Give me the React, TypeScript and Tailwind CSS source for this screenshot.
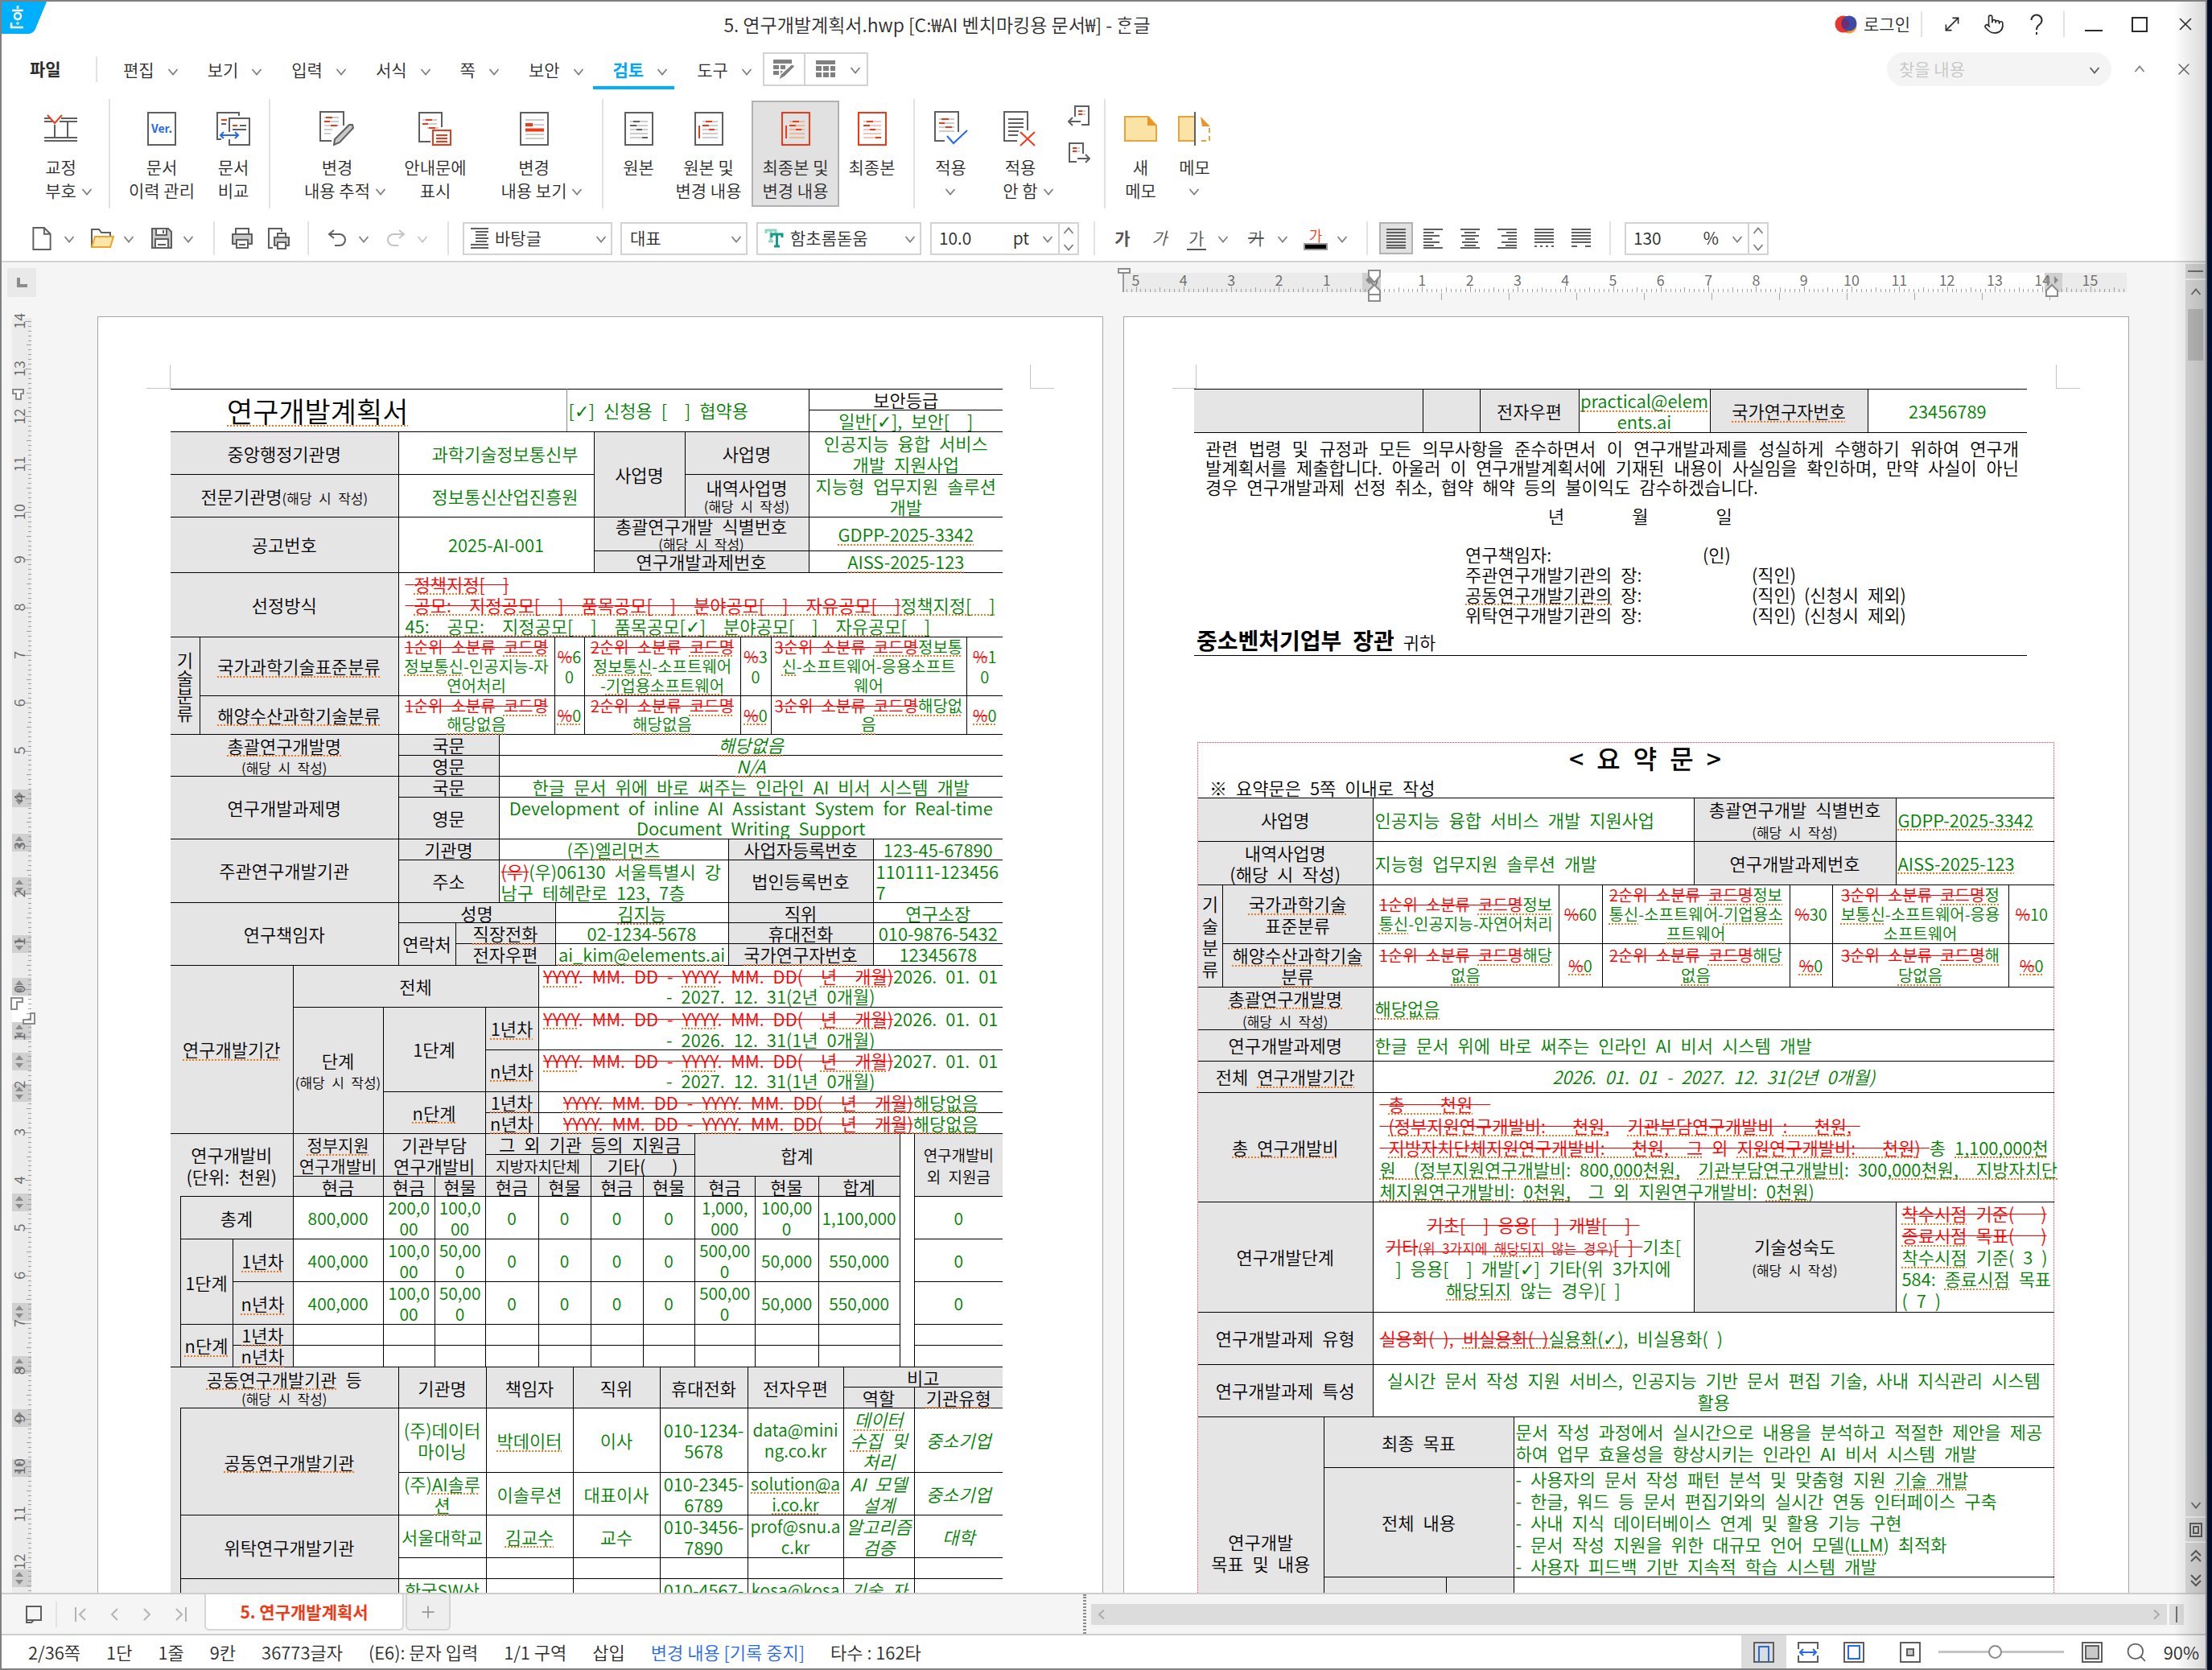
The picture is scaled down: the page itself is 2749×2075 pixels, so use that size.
import React from "react";
import clsx from "clsx";
import { MoveDiagonal, Pointer, Search, X, Plus } from "lucide-react";

/* ---------- rich text ---------- */

function withChecks(text: string): React.ReactNode {
  const parts = text.replace(/ /g, "\u2002").split("✓");
  return parts.map((p, i) => (
    <React.Fragment key={i}>
      {i > 0 && <span className="font-['DejaVu_Sans',sans-serif] leading-none">✓</span>}
      {p}
    </React.Fragment>
  ));
}

/* Inline marks: {..} spell-check underline, ^..^ deleted text, |..| small print. */
function Rich({ t }: { t: string }) {
  const out: React.ReactNode[] = [];
  let squiggle = false;
  let deleted = false;
  let small = false;
  let buf = "";
  const flush = () => {
    if (!buf) return;
    let node: React.ReactNode = withChecks(buf);
    buf = "";
    if (squiggle)
      node = (
        <span className="underline decoration-[#f07820] decoration-dotted decoration-2 underline-offset-[3px] [text-decoration-skip-ink:none]">
          {node}
        </span>
      );
    if (small) node = <small className="text-[17px] leading-none">{node}</small>;
    if (deleted) node = <del className="text-[#ff0000] line-through decoration-1">{node}</del>;
    out.push(<React.Fragment key={out.length}>{node}</React.Fragment>);
  };
  for (const ch of t) {
    if (ch === "{" || ch === "}") {
      flush();
      squiggle = ch === "{";
    } else if (ch === "^") {
      flush();
      deleted = !deleted;
    } else if (ch === "|") {
      flush();
      small = !small;
    } else buf += ch;
  }
  flush();
  return <>{out}</>;
}

type CellProps = { t?: string; c?: number; r?: number; className?: string };

function H({ t, c, r, className }: CellProps) {
  return (
    <th
      colSpan={c}
      rowSpan={r}
      className={clsx("border border-black bg-[#e5e5e5] p-0 text-center font-[350] whitespace-pre text-black", className)}
    >
      {t && <Rich t={t} />}
    </th>
  );
}

function D({ t, c, r, className }: CellProps) {
  return (
    <td
      colSpan={c}
      rowSpan={r}
      className={clsx("border border-black p-0 font-[350] whitespace-pre text-[#008000]", className ?? "text-center")}
    >
      {t && <Rich t={t} />}
    </td>
  );
}

function Sheet({ cols, children }: { cols: number[]; children: React.ReactNode }) {
  return (
    <table className="w-full table-fixed border-collapse border border-black text-[22px] leading-[25px] [border-style:solid_hidden_hidden_hidden]">
      <colgroup>
        {cols.map((w, i) => (
          <col key={i} style={{ width: w }} />
        ))}
      </colgroup>
      <tbody>{children}</tbody>
    </table>
  );
}

const NOTE = "|(해당 시 작성)|";
const PERIOD = "^{YYYY}. MM. DD - {YYYY}. MM. DD(  {년  개월})^";
const PERIOD_NONE = "^{YYYY}. MM. DD - {YYYY}. MM. {DD(  년  개월)}^{해당없음}";

/* ---------- pages ---------- */

function CropMarks() {
  return (
    <div className="mx-[60px] mt-[59px] flex justify-between">
      <div className="h-[30px] w-[30px] border-r border-b border-[#c4c4c4]" />
      <div className="h-[30px] w-[30px] border-b border-l border-[#c4c4c4]" />
    </div>
  );
}

function Page({ children }: { children: React.ReactNode }) {
  return (
    <article className="w-[1250px] shrink-0 border border-b-0 border-[#a6a6a6] bg-white">
      <CropMarks />
      {children}
    </article>
  );
}

function PlanPage() {
  return (
    <Page>
      <div className="ml-[90px] w-[1034px]">
        <Sheet cols={[492, 301, 241]}>
          <tr className="h-[26px]">
            <td rowSpan={2} className="border border-black border-r-[#8c8c8c] p-0 pl-[70px] text-left text-[35px] leading-[44px] font-[350] text-black">
              <Rich t="{연구개발계획서}" />
            </td>
            <D r={2} t="[✓] 신청용 [  ] 협약용" className="pl-[2px] text-left" />
            <D t="보안등급" className="text-center !text-black" />
          </tr>
          <tr className="h-[26px]">
            <D t="일반[✓], 보안[  ]" />
          </tr>
        </Sheet>
        <Sheet cols={[283, 243, 113, 154, 241]}>
          <tr className="h-[53px]">
            <H t="중앙행정기관명" />
            <D t="  과학기술정보통신부" />
            <H r={2} t="사업명" />
            <H t="사업명" />
            <D t={"인공지능 융합 서비스\n개발 지원사업"} className="text-center leading-[26px]" />
          </tr>
          <tr className="h-[53px]">
            <H t={"전문기관명" + NOTE} />
            <D t="  정보통신산업진흥원" />
            <H t={"내역사업명\n" + NOTE} className="leading-[21px]" />
            <D t={"지능형 업무지원 솔루션\n개발"} className="text-center leading-[26px]" />
          </tr>
          <tr className="h-[42px]">
            <H r={2} t="공고번호" />
            <D r={2} t="2025-AI-001" />
            <H c={2} t={"총괄연구개발 식별번호\n" + NOTE} className="leading-[20px]" />
            <D t="{GDPP-2025-3342}" />
          </tr>
          <tr className="h-[26px]">
            <H c={2} t="연구개발과제번호" />
            <D t="{AISS-2025-123}" />
          </tr>
        </Sheet>
        <Sheet cols={[283, 751]}>
          <tr className="h-[79px]">
            <H t="선정방식" />
            <D
              className="pl-[8px] text-left leading-[26px]"
              t={
                "^ {정책지정}[  ]^\n^ {공모:  지정공모[  ]  품목공모[  ]  분야공모[  ]  자유공모[  ]}^{정책지정[  ]}\n{45:  공모:  지정공모[  ]  품목공모[✓]  분야공모[  ]  자유공모[  ]}"
              }
            />
          </tr>
        </Sheet>
        <Sheet cols={[36, 247, 194, 37, 194, 38, 243, 45]}>
          <tr className="h-[73px]">
            <H r={2} t={"기\n술\n분\n류"} className="leading-[22px]" />
            <H t="{국가과학기술표준분류}" />
            <D t={"^1순위 소분류 {코드명}^\n{정보통신}-인공지능-자\n연어처리"} className="text-center text-[20px] leading-[24px]" />
            <D t={"^%^6\n0"} className="text-center text-[20px]" />
            <D t={"^2순위 소분류 {코드명}^\n{정보통신}-소프트웨어\n-{기업용소프트웨어}"} className="text-center text-[20px] leading-[24px]" />
            <D t={"^%^3\n0"} className="text-center text-[20px]" />
            <D t={"^3순위 소분류 {코드명}^{정보통}\n{신}-소프트웨어-응용소프트\n웨어"} className="text-center text-[20px] leading-[24px]" />
            <D t={"^%^1\n0"} className="text-center text-[20px]" />
          </tr>
          <tr className="h-[48px]">
            <H t="{해양수산과학기술분류}" />
            <D t={"^1순위 소분류 {코드명}^\n{해당없음}"} className="text-center text-[20px] leading-[23px]" />
            <D t="^{%}^{0}" className="text-center text-[20px]" />
            <D t={"^2순위 소분류 {코드명}^\n{해당없음}"} className="text-center text-[20px] leading-[23px]" />
            <D t="^{%}^{0}" className="text-center text-[20px]" />
            <D t={"^3순위 소분류 {코드명}^{해당없}\n{음}"} className="text-center text-[20px] leading-[23px]" />
            <D t="^{%}^{0}" className="text-center text-[20px]" />
          </tr>
        </Sheet>
        <Sheet cols={[283, 125, 626]}>
          <tr className="h-[26px]">
            <H r={2} t={"{총괄연구개발명}\n" + NOTE} />
            <H t="국문" />
            <D t="{해당없음}" className="text-center italic" />
          </tr>
          <tr className="h-[26px]">
            <H t="영문" />
            <D t="{N/A}" className="text-center italic" />
          </tr>
          <tr className="h-[26px]">
            <H r={2} t="연구개발과제명" />
            <H t="국문" />
            <D t="한글 문서 위에 바로 써주는 인라인 AI 비서 시스템 개발" />
          </tr>
          <tr className="h-[51px]">
            <H t="영문" />
            <D t={"Development of inline AI Assistant System for Real-time\nDocument Writing Support"} />
          </tr>
        </Sheet>
        <Sheet cols={[283, 125, 285, 180, 161]}>
          <tr className="h-[26px]">
            <H r={2} t="주관연구개발기관" />
            <H t="기관명" />
            <D t="(주){엘리먼츠}" />
            <H t="사업자등록번호" />
            <D t="123-45-67890" />
          </tr>
          <tr className="h-[53px]">
            <H t="주소" />
            <D t={"^(우)^(우)06130 서울특별시 강\n남구 테헤란로 123, 7층"} className="pl-[2px] text-left leading-[26px]" />
            <H t="법인등록번호" />
            <D t={"110111-123456\n7"} className="pl-[3px] text-left leading-[26px]" />
          </tr>
        </Sheet>
        <Sheet cols={[283, 71, 124, 215, 180, 161]}>
          <tr className="h-[25px] leading-[24px]">
            <H r={3} t="연구책임자" />
            <H c={2} t="성명" />
            <D t="{김지능}" />
            <H t="직위" />
            <D t="연구소장" />
          </tr>
          <tr className="h-[26px]">
            <H r={2} t="연락처" />
            <H t="{직장전화}" />
            <D t="02-1234-5678" />
            <H t="휴대전화" />
            <D t="010-9876-5432" />
          </tr>
          <tr className="h-[26px]">
            <H t="전자우편" />
            <D t="{ai_kim@elements.ai}" />
            <H t="{국가연구자번호}" />
            <D t="12345678" />
          </tr>
        </Sheet>
        <Sheet cols={[152, 112, 127, 66, 577]}>
          <tr className="h-[52px]">
            <H r={5} t="{연구개발기간}" />
            <H c={3} t="전체" />
            <D t={PERIOD + "2026. 01. 01\n- 2027. 12. 31(2년 0개월)"} />
          </tr>
          <tr className="h-[53px]">
            <H r={4} t={"단계\n" + NOTE} />
            <H r={2} t="1단계" />
            <H t="{1년차}" />
            <D t={PERIOD + "2026. 01. 01\n- 2026. 12. 31(1년 0개월)"} className="text-center leading-[26px]" />
          </tr>
          <tr className="h-[52px]">
            <H t="{n년차}" />
            <D t={PERIOD + "2027. 01. 01\n- 2027. 12. 31(1년 0개월)"} />
          </tr>
          <tr className="h-[26px]">
            <H r={2} t="{n단계}" />
            <H t="{1년차}" />
            <D t={PERIOD_NONE} />
          </tr>
          <tr className="h-[26px]">
            <H t="{n년차}" />
            <D t={PERIOD_NONE} />
          </tr>
        </Sheet>
        <Sheet cols={[12, 65, 75, 112, 64, 63, 66, 65, 65, 64, 75, 79, 101, 18, 110]}>
          <tr className="h-[26px]">
            <H r={3} c={3} t={"연구개발비\n(단위: 천원)"} className="border-b-0 leading-[27px]" />
            <H r={2} t={"{정부지원}\n연구개발비"} className="text-[21px] leading-[26px]" />
            <H r={2} c={2} t={"기관부담\n연구개발비"} className="leading-[26px]" />
            <H c={4} t="그 외 기관 등의 지원금" />
            <H r={2} c={3} t="합계" />
            <D r={8} className="border-b-0" />
            <H r={3} t={"연구개발비\n외 지원금"} className="text-[19px] leading-[27px]" />
          </tr>
          <tr className="h-[27px]">
            <H c={2} t="지방자치단체" className="text-[19px]" />
            <H c={2} t="기타(   )" />
          </tr>
          <tr className="h-[25px] leading-[24px]">
            {["현금", "현금", "현물", "현금", "현물", "현금", "현물", "현금", "현물", "합계"].map((s, i) => (
              <H key={i} t={s} />
            ))}
          </tr>
          <tr className="h-[53px] leading-[26px]">
            <H r={5} className="border-t-0" />
            <H c={2} t="총계" />
            {["800,000", "200,0\n00", "100,0\n00", "0", "0", "0", "0", "1,000,\n000", "100,00\n0", "1,100,000", "0"].map((s, i) => (
              <D key={i} t={s} className="text-center text-[21px]" />
            ))}
          </tr>
          <tr className="h-[53px] leading-[26px]">
            <H r={2} t="1단계" />
            <H t="{1년차}" />
            {["400,000", "100,0\n00", "50,00\n0", "0", "0", "0", "0", "500,00\n0", "50,000", "550,000", "0"].map((s, i) => (
              <D key={i} t={s} className="text-center text-[21px]" />
            ))}
          </tr>
          <tr className="h-[53px] leading-[26px]">
            <H t="{n년차}" />
            {["400,000", "100,0\n00", "50,00\n0", "0", "0", "0", "0", "500,00\n0", "50,000", "550,000", "0"].map((s, i) => (
              <D key={i} t={s} className="text-center text-[21px]" />
            ))}
          </tr>
          <tr className="h-[26px]">
            <H r={2} t="{n단계}" />
            <H t="{1년차}" />
            {Array.from({ length: 11 }, (_, i) => (
              <D key={i} />
            ))}
          </tr>
          <tr className="h-[26px]">
            <H t="{n년차}" />
            {Array.from({ length: 11 }, (_, i) => (
              <D key={i} />
            ))}
          </tr>
        </Sheet>
        <Sheet cols={[12, 271, 109, 108, 108, 109, 119, 88, 110]}>
          <tr className="h-[25px] leading-[24px]">
            <H r={2} c={2} t={"{공동연구개발기관} 등\n" + NOTE} className="border-b-0 leading-[22px]" />
            <H r={2} t="기관명" />
            <H r={2} t="책임자" />
            <H r={2} t="직위" />
            <H r={2} t="휴대전화" />
            <H r={2} t="전자우편" />
            <H c={2} t="비고" />
          </tr>
          <tr className="h-[26px]">
            <H t="역할" />
            <H t="{기관유형}" />
          </tr>
          <tr className="h-[80px] leading-[26px]">
            <H r={5} className="border-t-0" />
            <H r={2} t="{공동연구개발기관}" />
            <D t={"(주)데이터\n마이닝"} />
            <D t="{박데이터}" />
            <D t="이사" />
            <D t={"010-1234-\n5678"} />
            <D t={"data@mini\nng.co.kr"} className="text-center text-[21px]" />
            <D t={"{데이터}\n{수집} 및\n처리"} className="text-center italic" />
            <D t="중소기업" className="text-center italic" />
          </tr>
          <tr className="h-[53px] leading-[26px]">
            <D t={"(주){AI솔루\n션}"} />
            <D t="이솔루션" />
            <D t="대표이사" />
            <D t={"010-2345-\n6789"} />
            <D t={"{solution@a\ni.co.kr}"} className="text-center text-[21px]" />
            <D t={"AI 모델\n설계"} className="text-center italic" />
            <D t="중소기업" className="text-center italic" />
          </tr>
          <tr className="h-[53px] leading-[26px]">
            <H r={2} t="위탁연구개발기관" />
            <D t="서울대학교" />
            <D t="{김교수}" />
            <D t="교수" />
            <D t={"010-3456-\n7890"} />
            <D t={"prof@snu.a\nc.kr"} className="text-center text-[21px]" />
            <D t={"알고리즘\n검증"} className="text-center italic" />
            <D t="대학" className="text-center italic" />
          </tr>
          <tr className="h-[26px]">
            {Array.from({ length: 7 }, (_, i) => (
              <D key={i} />
            ))}
          </tr>
          <tr className="h-[53px] leading-[26px]">
            <H />
            <D t={"한국SW산\n업협회"} />
            <D t="최협회" />
            <D t="팀장" />
            <D t={"010-4567-\n8901"} />
            <D t={"kosa@kosa\n.or.kr"} className="text-center text-[21px]" />
            <D t={"기술 자\n문"} className="text-center italic" />
            <D t="협회" className="text-center italic" />
          </tr>
        </Sheet>
      </div>
    </Page>
  );
}

const SIGNERS: [string, string, string][] = [
  ["주관연구개발기관의 장:", "(직인)", ""],
  ["{공동연구개발기관의} 장:", "(직인)", "(신청시 제외)"],
  ["위탁연구개발기관의 장:", "(직인)", "(신청시 제외)"],
];

function SummaryPage() {
  return (
    <Page>
      <div className="ml-[87px] w-[1035px]">
        <Sheet cols={[284, 71, 123, 163, 196, 198]}>
          <tr className="h-[53px] leading-[26px]">
            <H />
            <H />
            <H t="전자우편" />
            <D t={"{practical@elem\nents.ai}"} className="text-center" />
            <H t="{국가연구자번호}" />
            <D t="23456789" />
          </tr>
        </Sheet>
        <section className="border-y border-black pt-[6px] text-[22px] leading-[24px] whitespace-pre-wrap text-black">
          <div className="mx-[14px] mr-[10px]">
            <p className="[text-align-last:justify]">관련  법령  및  규정과  모든  의무사항을  준수하면서  이  연구개발과제를  성실하게  수행하기  위하여  연구개</p>
            <p className="[text-align-last:justify]">발계획서를  제출합니다.  아울러  이  연구개발계획서에  기재된  내용이  사실임을  확인하며,  만약  사실이  아닌</p>
            <p>
              <Rich t="경우 연구개발과제 선정 취소, 협약 해약 등의 불이익도 감수하겠습니다." />
            </p>
          </div>
          <div className="mt-[12px] flex gap-[84px] pl-[440px]">
            <span>년</span>
            <span>월</span>
            <span>일</span>
          </div>
          <div className="mt-[24px] pl-[337px] leading-[25px]">
            <div className="flex">
              <span className="w-[295px]">연구책임자:</span>
              <span>(인)</span>
            </div>
            {SIGNERS.map(([name, seal, extra]) => (
              <div key={name} className="flex">
                <span className="w-[356px]">
                  <Rich t={name} />
                </span>
                <span className="w-[65px]">{seal}</span>
                <span>
                  <Rich t={extra} />
                </span>
              </div>
            ))}
          </div>
          <p className="mt-[2px] pl-[3px] leading-[34px]">
            <strong className="text-[28px] font-bold">
              <Rich t="중소벤처기업부 장관" />
            </strong>
            <Rich t=" 귀하" />
          </p>
        </section>
      </div>
      <section className="mt-[107px] ml-[91px] w-[1065px] border border-dotted border-[#e8375a] text-black">
        <h2 className="pl-[48px] text-center text-[32px] leading-[36px] font-medium">
          <Rich t="< 요 약 문 >" />
        </h2>
        <p className="mt-[6px] pl-[14px] text-[22px] leading-[26px]">
          <Rich t="※ 요약문은 5쪽 이내로 작성" />
        </p>
        <Sheet cols={[217, 399, 251, 197]}>
          <tr className="h-[54px]">
            <H t="사업명" />
            <D t="인공지능 융합 서비스 개발 지원사업" className="pl-[2px] text-left" />
            <H t={"총괄연구개발 식별번호\n" + NOTE} className="leading-[26px]" />
            <D t="{GDPP-2025-3342}" className="pl-[2px] text-left" />
          </tr>
          <tr className="h-[54px]">
            <H t={"내역사업명\n(해당 시 작성)"} className="leading-[26px]" />
            <D t="지능형 업무지원 솔루션 개발" className="pl-[2px] text-left" />
            <H t="연구개발과제번호" />
            <D t="{AISS-2025-123}" className="pl-[2px] text-left" />
          </tr>
        </Sheet>
        <Sheet cols={[30, 187, 231, 54, 233, 53, 219, 57]}>
          <tr className="h-[73px] text-[20px] leading-[24px]">
            <H r={2} t={"기\n술\n분\n류"} className="text-[22px] leading-[27px]" />
            <H t={"{국가과학기술}\n표준분류"} className="text-[22px] leading-[27px]" />
            <D t={"^1순위 소분류 {코드명}^{정보}\n{통신}-인공지능-자연어처리"} />
            <D t="^%^60" />
            <D t={"^2순위 소분류 {코드명}^{정보}\n{통신}-소프트웨어-{기업용소\n프트웨어}"} />
            <D t="^%^30" />
            <D t={"^3순위 소분류 {코드명}^{정}\n{보통신}-소프트웨어-응용\n소프트웨어"} />
            <D t="^%^10" />
          </tr>
          <tr className="h-[53px] text-[20px] leading-[25px]">
            <H t={"{해양수산과학기술\n분류}"} className="text-[22px] leading-[26px]" />
            <D t={"^1순위 소분류 {코드명}^{해당\n없음}"} />
            <D t="^{%}^{0}" />
            <D t={"^2순위 소분류 {코드명}^{해당\n없음}"} />
            <D t="^{%}^{0}" />
            <D t={"^3순위 소분류 {코드명}^{해\n당없음}"} />
            <D t="^{%}^{0}" />
          </tr>
        </Sheet>
        <Sheet cols={[217, 847]}>
          <tr className="h-[53px]">
            <H t={"{총괄연구개발명}\n" + NOTE} className="leading-[26px]" />
            <D t="{해당없음}" className="pl-[2px] text-left" />
          </tr>
          <tr className="h-[39px]">
            <H t="연구개발과제명" />
            <D t="한글 문서 위에 바로 써주는 인라인 AI 비서 시스템 개발" className="pl-[2px] text-left" />
          </tr>
          <tr className="h-[39px]">
            <H t="전체 {연구개발기간}" />
            <D t="2026. 01. 01 - 2027. 12. 31(2년 0개월)" className="text-center italic" />
          </tr>
          <tr className="h-[136px]">
            <H t="{총 연구개발비}" />
            <D
              className="pl-[8px] text-left leading-[27px]"
              t={
                "^ {총    천원}  ^\n^ {(정부지원연구개발비:   천원,}  {기관부담연구개발비} {:   천원,} ^\n^ {지방자치단체지원연구개발비:   천원,  그} 외 {지원연구개발비:   천원)} ^총 {1,100,000천}\n{원  (정부지원연구개발비}: 800,{000천원,}  {기관부담연구개발비}: 300,{000천원,  지방자치단}\n{체지원연구개발비}: {0천원,}  그 외 지원연구개발비: {0천원})"
              }
            />
          </tr>
        </Sheet>
        <Sheet cols={[217, 399, 251, 197]}>
          <tr className="h-[136px] leading-[27px]">
            <H t="연구개발단계" />
            <D
              t={
                "^기초[  ] 응용[  ] 개발[  ] ^\n^기타|(위 3가지에 {해당되지} 않는 경우)|[ ] ^기초[\n] 응용[  ] 개발[✓] 기타(위 3가지에\n{해당되지} 않는 경우)[ ]"
              }
            />
            <H t={"기술성숙도\n" + NOTE} />
            <D
              className="pl-[7px] text-left"
              t={"^{착수시점} 기준(   )^\n^{종료시점} 목표(   )^\n{착수시점} 기준( 3 )\n584: {종료시점} 목표\n( 7 )"}
            />
          </tr>
        </Sheet>
        <Sheet cols={[217, 847]}>
          <tr className="h-[65px]">
            <H t="연구개발과제 유형" />
            <D t="^실용화( ), {비실용화( )}^{실용화(✓)}, 비실용화( )" className="pl-[8px] text-left" />
          </tr>
          <tr className="h-[65px]">
            <H t="연구개발과제 특성" />
            <D
              t={"실시간 문서 작성 지원 서비스, 인공지능 기반 문서 편집 기술, 사내 지식관리 시스템\n활용"}
              className="text-center leading-[27px]"
            />
          </tr>
        </Sheet>
        <Sheet cols={[156, 152, 84, 672]}>
          <tr className="h-[63px] leading-[27px]">
            <H r={3} t={"연구개발\n목표 및 내용"} />
            <H c={2} t="최종 목표" />
            <D
              t={"문서 작성 과정에서 실시간으로 내용을 분석하고 적절한 제안을 제공\n하여 업무 효율성을 향상시키는 인라인 AI 비서 시스템 개발"}
              className="pl-[2px] text-left"
            />
          </tr>
          <tr className="h-[136px] leading-[27px]">
            <H c={2} t="전체 내용" />
            <D
              className="pl-[2px] text-left"
              t={
                "- 사용자의 문서 작성 패턴 분석 및 맞춤형 지원 {기술 개발}\n- 한글, 워드 등 문서 편집기와의 실시간 연동 인터페이스 구축\n- 사내 지식 데이터베이스 연계 및 활용 기능 구현\n- 문서 작성 지원을 위한 대규모 언어 모델({LLM}) 최적화\n- 사용자 피드백 기반 지속적 학습 시스템 개발"
              }
            />
          </tr>
          <tr className="h-[138px]">
            <H />
            <H />
            <D />
          </tr>
        </Sheet>
      </section>
    </Page>
  );
}

/* ---------- rulers ---------- */

const CM = 59.3;

function HorizontalRuler() {
  const zero = 1708;
  const ticks = Array.from({ length: 211 }, (_, i) => i - 52).filter((i) => i <= 157);
  return (
    <svg viewBox="121 326 2595 67" className="h-[67px] w-[2595px] shrink-0" fill="none">
      <rect x="1396" y="339" width="297" height="24" fill="#ebebeb" />
      <rect x="1716" y="339" width="825" height="24" fill="#fff" />
      <rect x="2563" y="339" width="80" height="24" fill="#ebebeb" />
      <rect x="1693" y="339" width="23" height="24" fill="#d0d0d0" />
      <rect x="2541" y="339" width="22" height="24" fill="#d0d0d0" />
      {ticks.map((i) => (
        <path
          key={i}
          d={`M${Math.round(zero + (i * CM) / 10) + 0.5} ${i % 10 === 0 ? 356 : i % 5 === 0 ? 357 : 359}V363`}
          stroke="#a0a0a0"
        />
      ))}
      {Array.from({ length: 10 }, (_, i) => (
        <path key={i} d={`M${1791.5 + i * 84} 364V373`} stroke="#a8a8a8" />
      ))}
      <g fill="#666" fontSize="18" textAnchor="middle">
        {Array.from({ length: 21 }, (_, i) => i - 5).map((n) => (
          <text key={n} x={zero + n * CM} y="355">
            {Math.abs(n)}
          </text>
        ))}
      </g>
      <path d="M1697 348l5-5 5 5-5 5zM2547 343v10l-5-5zM2553 343v10l5-5z" fill="#8c8c8c" />
      <path d="M1396 339V363" stroke="#9a9a9a" strokeWidth="2" />
      <g fill="#fff" stroke="#8c8c8c" strokeWidth="2">
        <rect x="1390" y="334" width="14" height="5" />
        <path d="M1701 336h14v7l-7 8-7-8z" />
        <path d="M1708 354l7 7v5h-14v-5z" />
        <rect x="1701" y="366" width="14" height="8" />
        <path d="M2550 354l7 7v7h-14v-7z" />
      </g>
    </svg>
  );
}

const BANDS = [981, 1036, 1090, 1162, 1215, 1270, 1308, 1347, 1483, 1619, 1685, 1751, 1813, 1950];

function VerticalRuler() {
  const zero = 1229;
  const ticks = Array.from({ length: 268 }, (_, i) => i - 140);
  return (
    <svg viewBox="2 393 60 1586" className="h-[1586px] w-[60px] overflow-visible" fill="none">
      <rect x="15" y="395" width="24" height="1584" fill="#ebebeb" />
      <rect x="15" y="1238" width="24" height="32" fill="#fff" />
      {BANDS.map((y) => (
        <rect key={y} x="15" y={y} width="24" height="22" fill="#d0d0d0" />
      ))}
      {ticks.map((i) => (
        <path
          key={i}
          d={`M${i % 10 === 0 ? 31 : i % 5 === 0 ? 33 : 35} ${Math.round(zero + (i * CM) / 10) + 0.5}H39`}
          stroke="#a0a0a0"
        />
      ))}
      {BANDS.map((y) => (
        <path key={y} d={`M19 ${y + 9}h10l-5-6zM19 ${y + 13}h10l-5 6z`} fill="#8c8c8c" />
      ))}
      <g fill="#666" fontSize="18" textAnchor="middle">
        {Array.from({ length: 27 }, (_, i) => i - 14).map((n) => (
          <text key={n} transform={`translate(31 ${zero + n * CM}) rotate(-90)`}>
            {Math.abs(n)}
          </text>
        ))}
      </g>
      <g fill="#fff" stroke="#8c8c8c" strokeWidth="2">
        <path d="M16 484h13v5h-3v7h-6v-7h-4z" />
        <path d="M14 1240h14v5h-7v9h-7z" />
        <path d="M38 1259h5v13h-14v-5h9z" />
      </g>
    </svg>
  );
}

/* ---------- icons ---------- */

function Chevron({ dir = "down", className = "text-[#808080]" }: { dir?: "down" | "up" | "left" | "right"; className?: string }) {
  const d = {
    down: "M1.5 5l5.500 6.500 5.500-6.500",
    up: "M1.500 10l5.500-6.500 5.500 6.500",
    left: "M10 1.500l-6 5.500 6 5.500",
    right: "M4 1.500l6 5.500-6 5.500",
  }[dir];
  return (
    <svg viewBox="0 0 14 14" className={clsx("pointer-events-none h-[14px] w-[14px] shrink-0", className)} fill="none" stroke="currentColor" strokeWidth="1.8">
      <path d={d} />
    </svg>
  );
}

const INK = "#5f5f5f";
const RED = "#f03a17";

function Ico({ children, w = 44 }: { children: React.ReactNode; w?: number }) {
  return (
    <svg viewBox={`0 0 ${w} 44`} className="h-[44px] shrink-0" width={w} fill="none" strokeWidth="2">
      {children}
    </svg>
  );
}

function TrackedDoc({ frame, rest, accent, bar }: { frame: string; rest: string; accent: string; bar?: boolean }) {
  const x = bar ? 3 : 0;
  return (
    <Ico>
      <rect x="5" y="2" width="34" height="40" stroke={frame} />
      {bar && <path d="M10 18V34" stroke={accent} />}
      <path d={`M${11 + x} 13h${22 - x}M${11 + x} 18h${22 - x}M${11 + x} 23h${22 - x}M${11 + x} 28h${22 - x}M${11 + x} 33h${22 - x}`} stroke={rest} />
      <path d={`M${15 + x} 13h8M${11 + x} 18h8M${19 + x} 23h7${bar ? "" : "M26 33h7"}`} stroke={accent} />
    </Ico>
  );
}

const ribbonIcons: Record<string, React.ReactNode> = {
  proof: (
    <Ico>
      <path d="M1 9h7M22 9h20M1 13h10M20 13h22M1 33h41M1 37h41M14 17v16M30 14v19" stroke={INK} />
      <path d="M5 5l9 10 9-10" stroke={RED} />
    </Ico>
  ),
  version: (
    <Ico>
      <rect x="5" y="2" width="34" height="40" stroke={INK} />
      <text x="22" y="27" textAnchor="middle" fontSize="14" fontWeight="700" fill="#2468f2" stroke="none">
        Ver.
      </text>
    </Ico>
  ),
  compare: (
    <Ico>
      <path d="M29 6V2H2V35h5M17 26V9h25v33H17V35" stroke={INK} />
      <path d="M7 11h7M21 18h6" stroke={RED} />
      <path d="M7 16h6M30 18h8M21 23h17" stroke={INK} />
      <path d="M6 30h22M10 26l-4 4 4 4M24 26l4 4-4 4" stroke="#2468f2" />
    </Ico>
  ),
  track: (
    <Ico>
      <path d="M30 18V1H1V37h14" stroke={INK} />
      <path d="M6 8h18M6 13h18M6 18h18M6 23h10M6 28h8" stroke="#ccc" />
      <path d="M8 8h8M6 13h7M14 18h8" stroke={RED} />
      <path d="M19 35l18-18 4 0 1 4-17 18-7 3z" fill="#c8c8c8" stroke={INK} />
    </Ico>
  ),
  notice: (
    <Ico>
      <path d="M30 20V2H2V38h14" stroke={INK} />
      <path d="M6 11h18M6 16h18M12 21h14" stroke="#ccc" />
      <path d="M10 11h8M6 16h7M14 21h8" stroke={RED} />
      <path d="M19 24h22v18H19zM23 30h14M23 34h14M23 38h14" stroke={RED} />
    </Ico>
  ),
  view: (
    <Ico>
      <rect x="5" y="2" width="34" height="40" stroke={INK} />
      <path d="M11 11h23M20 17h14M11 29h23M11 34h23" stroke="#ccc" />
      <path d="M11 17h9M11 23.500h23" stroke={RED} strokeWidth="4" />
    </Ico>
  ),
  original: <TrackedDoc frame={INK} rest="#ccc" accent={INK} />,
  originalChanges: <TrackedDoc frame={INK} rest="#ccc" accent={RED} bar />,
  finalChanges: <TrackedDoc frame={RED} rest="#eab99a" accent={RED} bar />,
  final: <TrackedDoc frame={RED} rest="#f7c3b6" accent={RED} />,
  accept: (
    <Ico>
      <path d="M31 26V1H2V37h12" stroke={INK} />
      <path d="M7 10h19M7 15h19M7 20h19M7 25h19" stroke="#ccc" />
      <path d="M10 10h9M7 15h7M15 20h8" stroke={RED} />
      <path d="M17 31l8 9 17-16" stroke="#2468f2" />
    </Ico>
  ),
  reject: (
    <Ico>
      <path d="M31 24V1H2V37h16" stroke={INK} />
      <path d="M7 10h19M7 15h19M7 20h19M7 25h13M7 30h12" stroke={INK} />
      <path d="M22 26l18 17M40 26L22 43" stroke={RED} />
    </Ico>
  ),
  memo: (
    <Ico>
      <path d="M2 7h29l10 11v19H2z" fill="#fbe3a6" stroke="#e8a33a" />
      <path d="M30 7l11 11H30z" fill="#e8962a" />
    </Ico>
  ),
  memoView: (
    <Ico>
      <path d="M21 7H2v30h19" fill="#fbe3a6" stroke="#e8a33a" />
      <path d="M29 7l12 12H31z" fill="#e8962a" />
      <path d="M40 21v16H26" stroke="#e8a33a" strokeDasharray="6 4" />
      <path d="M22 1v42" stroke={INK} />
    </Ico>
  ),
};

function Lines({ rows }: { rows: [number, number][] }) {
  return (
    <svg viewBox="0 0 26 26" className="h-[26px] w-[26px]" fill="none" stroke={INK} strokeWidth="2">
      {rows.map(([a, b], i) => (
        <path key={i} d={`M${a} ${2 + i * 4 - (i > 5 ? 1 : 0)}H${b}`} />
      ))}
    </svg>
  );
}

/* ---------- ribbon ---------- */

type RibbonItem = { icon: string; lines: string[]; w: string; more?: boolean; on?: boolean };

function RibbonButton({ icon, lines, w, more, on }: RibbonItem) {
  return (
    <button
      type="button"
      aria-pressed={on}
      className={clsx(
        "flex shrink-0 flex-col items-center pt-[15px] leading-[29px]",
        w,
        on ? "mt-[2px] ml-[11px] h-[132px] border-2 border-[#b2b2b2] bg-[#e1e1e1] !pt-[11px]" : "h-[136px]",
      )}
    >
      {ribbonIcons[icon]}
      <span className="mt-[11px] flex flex-col items-center whitespace-nowrap">
        {lines.map((l, i) => (
          <span key={i} className="relative h-[29px]">
            {l}
            {more && i === 1 && (
              <span className="absolute top-[8px] left-full ml-[6px]">
                <Chevron />
              </span>
            )}
          </span>
        ))}
        {more && lines.length === 1 && <Chevron className="mt-[8px] text-[#808080]" />}
      </span>
    </button>
  );
}

const GROUPS: { cls: string; items: RibbonItem[] }[] = [
  { cls: "pl-[14px]", items: [{ icon: "proof", lines: ["교정", "부호"], w: "w-[119px]", more: true }] },
  {
    cls: "pr-[20px]",
    items: [
      { icon: "version", lines: ["문서", "이력 관리"], w: "w-[130px]" },
      { icon: "compare", lines: ["문서", "비교"], w: "w-[48px]" },
    ],
  },
  {
    cls: "",
    items: [
      { icon: "track", lines: ["변경", "내용 추적"], w: "w-[168px]", more: true },
      { icon: "notice", lines: ["안내문에", "표시"], w: "w-[76px]" },
      { icon: "view", lines: ["변경", "내용 보기"], w: "w-[169px]", more: true },
    ],
  },
  {
    cls: "pr-[11px]",
    items: [
      { icon: "original", lines: ["원본"], w: "w-[89px]" },
      { icon: "originalChanges", lines: ["원본 및", "변경 내용"], w: "w-[85px]" },
      { icon: "finalChanges", lines: ["최종본 및", "변경 내용"], w: "w-[109px]", on: true },
      { icon: "final", lines: ["최종본"], w: "w-[81px]" },
    ],
  },
];

function Divider({ className }: { className?: string }) {
  return <span className={clsx("w-[2px] shrink-0 bg-[#e2e2e2]", className)} />;
}

function Ribbon() {
  return (
    <div className="flex h-[152px] shrink-0 pt-[7px]">
      {GROUPS.map((g, i) => (
        <div key={i} className="flex">
          <div className={clsx("flex", g.cls)}>
            {g.items.map((it) => (
              <RibbonButton key={it.icon} {...it} />
            ))}
          </div>
          <Divider className="-mr-[1px] h-[136px]" />
        </div>
      ))}
      <RibbonButton icon="accept" lines={["적용"]} w="w-[91px]" more />
      <RibbonButton icon="reject" lines={["적용", "안 함"]} w="w-[82px]" more />
      <div className="flex w-[63px] flex-col items-center gap-[18px] pt-[7px]">
        <button type="button" aria-label="이전 변경 내용">
          <svg viewBox="0 0 28 28" className="h-[28px] w-[28px]" fill="none" stroke={INK} strokeWidth="2">
            <path d="M9 15V2h17v23h-9M16 21H1M6 16l-5 5 5 5" />
            <path d="M13 8h5M13 12h5" stroke={RED} />
            <path d="M18 8h4M18 12h4" stroke="#ccc" />
          </svg>
        </button>
        <button type="button" aria-label="다음 변경 내용">
          <svg viewBox="0 0 28 28" className="h-[28px] w-[28px]" fill="none" stroke={INK} strokeWidth="2">
            <path d="M19 15V2H2v23h9M12 21h15M22 16l5 5-5 5" />
            <path d="M6 8h5M6 12h5" stroke={RED} />
            <path d="M11 8h4M11 12h4" stroke="#ccc" />
          </svg>
        </button>
      </div>
      <Divider className="h-[136px]" />
      <RibbonButton icon="memo" lines={["새", "메모"]} w="w-[87px]" />
      <RibbonButton icon="memoView" lines={["메모"]} w="w-[47px]" more />
    </div>
  );
}

/* ---------- toolbar ---------- */

function IconButton({ label, className, children }: { label: string; className?: string; children: React.ReactNode }) {
  return (
    <button type="button" aria-label={label} className={clsx("flex h-[40px] shrink-0 items-center justify-center", className)}>
      {children}
    </button>
  );
}

function Combo({ label, value, className, icon }: { label: string; value: string; className: string; icon?: React.ReactNode }) {
  return (
    <label className={clsx("relative flex h-[41px] shrink-0 items-center border-2 border-[#d3d3d3]", className)}>
      {icon && <span className="pointer-events-none absolute left-[8px]">{icon}</span>}
      <select aria-label={label} defaultValue={value} className={clsx("h-full w-full appearance-none bg-transparent outline-none", icon ? "pl-[38px]" : "pl-[10px]")}>
        <option>{value}</option>
      </select>
      <span className="pointer-events-none absolute right-[5px]">
        <Chevron />
      </span>
    </label>
  );
}

function Spin({ label, value, unit, className }: { label: string; value: string; unit: string; className: string }) {
  return (
    <div className={clsx("flex h-[41px] shrink-0 items-center border-2 border-[#d3d3d3]", className)}>
      <input aria-label={label} defaultValue={value} className="min-w-0 flex-1 pl-[9px] outline-none" />
      <span>{unit}</span>
      <button type="button" aria-label={label + " 목록"} className="ml-[16px]">
        <Chevron />
      </button>
      <span className="ml-[6px] flex h-full w-[24px] flex-col items-center justify-between border-l-2 border-[#d3d3d3] py-[2px]">
        <button type="button" aria-label={label + " 크게"}>
          <Chevron dir="up" />
        </button>
        <button type="button" aria-label={label + " 작게"}>
          <Chevron />
        </button>
      </span>
    </div>
  );
}

const full = (n: number): [number, number][] => Array.from({ length: n }, () => [1, 25]);

function Toolbar() {
  const sep = "h-[42px]";
  return (
    <div className="flex h-[58px] shrink-0 items-center border-b-2 border-[#d3d3d3] pl-[31px]">
      <IconButton label="새 문서" className="w-[38px]">
        <svg viewBox="0 0 24 30" className="h-[29px] w-[24px]" fill="#fff" stroke={INK} strokeWidth="2">
          <path d="M1 1h14l8 8v20H1zM15 1v8h8" />
        </svg>
      </IconButton>
      <IconButton label="새 문서 목록" className="w-[30px]">
        <Chevron />
      </IconButton>
      <IconButton label="열기" className="ml-[7px] w-[38px]">
        <svg viewBox="0 0 30 26" className="h-[26px] w-[30px]" fill="none" strokeWidth="2">
          <path d="M2 24V2h9l3 4h11v5" stroke={INK} />
          <path d="M6 11h23l-4 13H2z" fill="#fde6a8" stroke="#eda42e" />
        </svg>
      </IconButton>
      <IconButton label="열기 목록" className="w-[28px]">
        <Chevron />
      </IconButton>
      <IconButton label="저장" className="ml-[8px] w-[38px]">
        <svg viewBox="0 0 26 26" className="h-[26px] w-[26px]" fill="none" stroke={INK} strokeWidth="2">
          <path d="M1 1h20l4 4v20H1z" fill="#c9c9c9" />
          <path d="M6 1v8h13V1zM5 25V14h16v11z" fill="#fff" />
          <path d="M15 3v4M8 21h10" />
        </svg>
      </IconButton>
      <IconButton label="저장 목록" className="w-[28px]">
        <Chevron />
      </IconButton>
      <Divider className={clsx(sep, "ml-[17px]")} />
      <IconButton label="인쇄" className="ml-[15px] w-[38px]">
        <svg viewBox="0 0 26 26" className="h-[26px] w-[26px]" fill="none" stroke={INK} strokeWidth="2">
          <path d="M5 8V1h16v7" />
          <path d="M1 8h24v12H1z" fill="#c9c9c9" />
          <path d="M6 15h14v10H6zM9 21h8" fill="#fff" />
        </svg>
      </IconButton>
      <IconButton label="미리 보기" className="ml-[7px] w-[38px]">
        <svg viewBox="0 0 27 27" className="h-[27px] w-[27px]" fill="none" stroke={INK} strokeWidth="2">
          <path d="M17 5V1H1v24h5M12 12V7h10v5" />
          <path d="M8 12h18v10H8z" fill="#c9c9c9" />
          <path d="M12 18h10v8H12z" fill="#fff" />
        </svg>
      </IconButton>
      <Divider className={clsx(sep, "ml-[17px]")} />
      <IconButton label="되돌리기" className="ml-[16px] w-[38px]">
        <svg viewBox="0 0 24 22" className="h-[22px] w-[24px]" fill="none" stroke={INK} strokeWidth="2">
          <path d="M2 6h13a7 7 0 0 1 0 14H9M8 1L2 6l6 5" />
        </svg>
      </IconButton>
      <IconButton label="되돌리기 목록" className="w-[28px]">
        <Chevron />
      </IconButton>
      <IconButton label="다시 실행" className="ml-[7px] w-[38px]">
        <svg viewBox="0 0 24 22" className="h-[22px] w-[24px]" fill="none" stroke="#c4c4c4" strokeWidth="2">
          <path d="M22 6H9a7 7 0 0 0 0 14h6M16 1l6 5-6 5" />
        </svg>
      </IconButton>
      <IconButton label="다시 실행 목록" className="w-[28px]">
        <Chevron className="text-[#c4c4c4]" />
      </IconButton>
      <Divider className={clsx(sep, "ml-[17px]")} />
      <Combo
        label="스타일"
        value="바탕글"
        className="ml-[17px] w-[186px]"
        icon={
          <svg viewBox="0 0 22 26" className="h-[26px] w-[22px]" fill="none" stroke={INK} strokeWidth="2">
            <path d="M0 1h22M6 5h16M6 9h14M6 13h16M6 17h14M0 21h22M0 25h22" />
          </svg>
        }
      />
      <Combo label="언어" value="대표" className="ml-[10px] w-[158px]" />
      <Combo
        label="글꼴"
        value="함초롬돋움"
        className="ml-[11px] w-[205px] [&_select]:pl-[40px]"
        icon={
          <svg viewBox="0 0 24 24" className="h-[24px] w-[24px]" fill="none" strokeWidth="3">
            <path d="M2 6V2h12v4M8 2v14M5 16h6" stroke="#8fd6bd" />
            <path d="M9 11V7h13v4M15.500 7v15M12 22h7" stroke="#139a8c" />
          </svg>
        }
      />
      <Spin label="글자 크기" value="10.0" unit="pt" className="ml-[11px] w-[185px]" />
      <Divider className={clsx(sep, "ml-[18px]")} />
      <IconButton label="진하게" className="ml-[11px] w-[46px]">
        <b className="font-bold text-[#555]">가</b>
      </IconButton>
      <IconButton label="기울임" className="w-[46px]">
        <i className="text-[#555]">가</i>
      </IconButton>
      <IconButton label="밑줄" className="w-[46px]">
        <span className="border-b-2 border-[#555] px-[2px] leading-[27px] text-[#555]">가</span>
      </IconButton>
      <IconButton label="밑줄 목록" className="w-[20px]">
        <Chevron />
      </IconButton>
      <IconButton label="취소선" className="ml-[8px] w-[46px]">
        <span className="text-[#555] line-through decoration-2">가</span>
      </IconButton>
      <IconButton label="취소선 목록" className="w-[20px]">
        <Chevron />
      </IconButton>
      <IconButton label="글자 색" className="ml-[8px] w-[46px] flex-col">
        <span className="text-[18px] leading-[20px] text-[#f03a17]">가</span>
        <span className="h-[9px] w-[30px] border-2 border-[#999] bg-black" />
      </IconButton>
      <IconButton label="글자 색 목록" className="w-[20px]">
        <Chevron />
      </IconButton>
      <Divider className={clsx(sep, "ml-[20px]")} />
      <IconButton label="양쪽 정렬" className="ml-[14px] w-[42px] border-2 border-[#b2b2b2] bg-[#e1e1e1]">
        <Lines rows={full(7)} />
      </IconButton>
      <IconButton label="왼쪽 정렬" className="ml-[4px] w-[42px]">
        <Lines rows={[[1, 25], [1, 14], [1, 21], [1, 12], [1, 21], [1, 14], [1, 25]]} />
      </IconButton>
      <IconButton label="가운데 정렬" className="ml-[4px] w-[42px]">
        <Lines rows={[[1, 25], [6, 20], [2, 24], [7, 19], [3, 23], [6, 20], [1, 25]]} />
      </IconButton>
      <IconButton label="오른쪽 정렬" className="ml-[4px] w-[42px]">
        <Lines rows={[[1, 25], [12, 25], [6, 25], [14, 25], [6, 25], [11, 25], [1, 25]]} />
      </IconButton>
      <IconButton label="배분 정렬" className="ml-[4px] w-[42px]">
        <svg viewBox="0 0 26 26" className="h-[26px] w-[26px]" fill="none" stroke={INK} strokeWidth="2">
          <path d="M1 2h24M1 6h24M1 10h24M1 14h24M1 18h24" />
          <path d="M1 23h24" strokeDasharray="3 4" />
        </svg>
      </IconButton>
      <IconButton label="나눔 정렬" className="ml-[4px] w-[42px]">
        <svg viewBox="0 0 26 26" className="h-[26px] w-[26px]" fill="none" stroke={INK} strokeWidth="2">
          <path d="M1 2h24M1 6h24M1 10h24M1 14h24M1 18h24M1 23h7M18 23h7" />
        </svg>
      </IconButton>
      <Divider className={clsx(sep, "ml-[14px]")} />
      <Spin label="줄 간격" value="130" unit="%" className="ml-[17px] w-[179px]" />
    </div>
  );
}

/* ---------- title bar and menu ---------- */

function TitleBar() {
  return (
    <header className="grid h-[56px] shrink-0 grid-cols-[1fr_auto_1fr] items-center">
      <svg viewBox="0 0 56 40" className="h-[40px] w-[56px] self-start" role="img" aria-label="한글">
        <path d="M0 0H56L42 34Q39 40 33 40H0Z" fill="#00b0ff" />
        <g fill="none" stroke="#fff" strokeWidth="2.500">
          <path d="M20 5v4M13 11h14M12 26v6h15" />
          <circle cx="20" cy="18" r="4" />
          <circle cx="20" cy="27" r="0.500" />
        </g>
      </svg>
      <h1 className="-ml-[414px] text-[23px] whitespace-nowrap">5. 연구개발계획서.hwp [C:₩AI 벤치마킹용 문서₩] - ᄒᆞᆫ글</h1>
      <div className="flex items-center justify-end">
        <button type="button" className="mr-[13px] flex items-center gap-[8px] whitespace-nowrap">
          <svg viewBox="0 0 28 24" className="h-[24px] w-[28px]">
            <circle cx="18" cy="14" r="9.500" fill="#f39a2c" />
            <circle cx="11" cy="12" r="10.500" fill="#e8352e" />
            <circle cx="18" cy="11" r="9.500" fill="#3c4ba3" />
            <path d="M11 5a9.500 9.500 0 0 0 0 13 9.500 9.500 0 0 0 8-6 12 12 0 0 0-8-7z" fill="#6b2f78" />
          </svg>
          로그인
        </button>
        <Divider className="h-[32px]" />
        <button type="button" aria-label="전체 화면" className="ml-[24px]">
          <MoveDiagonal size={26} strokeWidth={1.500} />
        </button>
        <button type="button" aria-label="터치 모드" className="ml-[26px]">
          <Pointer size={26} strokeWidth={1.500} />
        </button>
        <button type="button" aria-label="도움말" className="ml-[32px]">
          <svg viewBox="0 0 16 26" className="h-[26px] w-[16px]" fill="none" stroke="currentColor" strokeWidth="2">
            <path d="M1.500 8a6.500 6.500 0 1 1 10 5.500Q8 16 8 20M8 23v3" />
          </svg>
        </button>
        <Divider className="ml-[25px] h-[32px]" />
        <button type="button" aria-label="최소화" className="ml-[25px] flex h-[26px] w-[22px] items-end pb-[4px]">
          <span className="h-[2px] w-full bg-current" />
        </button>
        <button type="button" aria-label="최대화" className="ml-[36px] h-[19px] w-[20px] border-2 border-current" />
        <button type="button" aria-label="닫기" className="mr-[12px] ml-[34px]">
          <X size={26} strokeWidth={1.500} />
        </button>
      </div>
    </header>
  );
}

function MenuBar() {
  const menus = ["편집", "보기", "입력", "서식", "쪽", "보안", "검토", "도구"];
  return (
    <nav className="flex h-[58px] shrink-0 items-center pb-[2px]">
      <button type="button" className="ml-[35px] w-[82px] text-left font-bold">
        파일
      </button>
      <Divider className="h-[32px]" />
      <div className="ml-[7px] flex gap-[3px]">
        {menus.map((m) => {
          const on = m === "검토";
          return (
            <button
              key={m}
              type="button"
              className={clsx(
                "flex items-center border-b-4 pt-[9px] pr-[8px] pb-[5px] pl-[25px] leading-[31px]",
                on ? "border-[#00b0ff] font-bold text-[#00a8f5]" : "border-transparent",
              )}
            >
              {m}
              <Chevron className="mt-[3px] ml-[16px] text-[#808080]" />
            </button>
          );
        })}
      </div>
      <div className="ml-[5px] flex h-[42px] items-center border-2 border-[#d3d3d3]">
        <button type="button" aria-label="표 그리기" className="flex h-full w-[51px] items-center justify-center border-r-2 border-[#d3d3d3]">
          <svg viewBox="0 0 28 26" className="h-[26px] w-[28px]" fill="#808080">
            <path d="M1 1h23v5H1zM1 8h7v5H1zM10 8h6v5h-6zM1 15h7v5H1zM10 15h3l-3 4z" />
            <path d="M24 7l4 2-13 13-7 4 2-6z" stroke="#fff" strokeWidth="1" />
          </svg>
        </button>
        <button type="button" aria-label="표" className="flex items-center">
          <svg viewBox="0 0 26 24" className="ml-[12px] h-[24px] w-[26px]" fill="#808080">
            <path d="M1 1h24v5H1zM1 8h7v6H1zM10 8h7v6h-7zM19 8h6v6h-6zM1 16h7v6H1zM10 16h7v6h-7zM19 16h6v6h-6z" />
          </svg>
          <Chevron className="mr-[7px] ml-[17px] text-[#808080]" />
        </button>
      </div>
      <div className="relative ml-auto flex h-[42px] w-[279px] items-center rounded-full bg-[#f4f4f4]">
        <input aria-label="찾을 내용" placeholder="찾을 내용" className="w-full bg-transparent pl-[15px] outline-none placeholder:text-[#c6c6c6]" />
        <button type="button" aria-label="찾기 목록" className="absolute right-[14px]">
          <Chevron className="text-[#5f5f5f]" />
        </button>
      </div>
      <button type="button" aria-label="메뉴 접기" className="ml-[28px]">
        <Chevron dir="up" />
      </button>
      <button type="button" aria-label="문서 닫기" className="mr-[15px] ml-[36px] text-[#6a6a6a]">
        <X size={24} strokeWidth={1.500} />
      </button>
    </nav>
  );
}

/* ---------- scroll bar, tabs, status ---------- */

function SideScroll() {
  return (
    <div className="flex w-[25px] shrink-0 flex-col gap-[2px] pt-[2px]">
      <button type="button" aria-label="창 나누기" className="flex h-[18px] items-center justify-center bg-[#d8d8d8]">
        <span className="h-[2px] w-[19px] bg-[#707070]" />
      </button>
      <div className="flex flex-1 flex-col items-center bg-[#dcdcdc] py-[8px]">
        <Chevron dir="up" className="text-[#6a6a6a]" />
        <div className="mt-[14px] h-[64px] w-[19px] bg-[#bdbdbd]" />
        <Chevron className="mt-auto text-[#6a6a6a]" />
      </div>
      <button type="button" aria-label="쪽 찾기" className="flex h-[29px] items-center justify-center bg-[#dcdcdc]">
        <svg viewBox="0 0 16 18" className="h-[18px] w-[16px]" fill="none" stroke={INK} strokeWidth="2">
          <path d="M1 1h14v16H1zM5 5h6v8H5z" />
        </svg>
      </button>
      <div className="flex h-[62px] flex-col items-center justify-around bg-[#dcdcdc]">
        <button type="button" aria-label="이전 쪽">
          <svg viewBox="0 0 14 16" className="h-[16px] w-[14px]" fill="none" stroke={INK} strokeWidth="2">
            <path d="M1 8l6-6 6 6M1 15l6-6 6 6" />
          </svg>
        </button>
        <button type="button" aria-label="다음 쪽">
          <svg viewBox="0 0 14 16" className="h-[16px] w-[14px]" fill="none" stroke={INK} strokeWidth="2">
            <path d="M1 1l6 6 6-6M1 8l6 6 6-6" />
          </svg>
        </button>
      </div>
    </div>
  );
}

function TabStrip() {
  return (
    <div className="flex h-[53px] shrink-0 border-y-2 border-[#cdcdcd] bg-[#f5f5f5]">
      <div className="flex items-center text-[#b4b4b4]">
        <button type="button" aria-label="문서 목록" className="ml-[29px]">
          <svg viewBox="0 0 22 24" className="h-[24px] w-[22px]" fill="none" stroke={INK} strokeWidth="2">
            <path d="M2 19V2h18v17h-9M2 19v3h6l3-3z" />
          </svg>
        </button>
        <Divider className="ml-[16px] h-[32px]" />
        <button type="button" aria-label="첫 탭" className="ml-[21px]">
          <svg viewBox="0 0 16 18" className="h-[18px] w-[16px]" fill="none" stroke="currentColor" strokeWidth="2">
            <path d="M2 0v18M14 2L7 9l7 7" />
          </svg>
        </button>
        <button type="button" aria-label="이전 탭" className="ml-[26px]">
          <svg viewBox="0 0 16 18" className="h-[18px] w-[16px]" fill="none" stroke="currentColor" strokeWidth="2">
            <path d="M12 2L5 9l7 7" />
          </svg>
        </button>
        <button type="button" aria-label="다음 탭" className="ml-[25px]">
          <svg viewBox="0 0 16 18" className="h-[18px] w-[16px]" fill="none" stroke="currentColor" strokeWidth="2">
            <path d="M4 2l7 7-7 7" />
          </svg>
        </button>
        <button type="button" aria-label="마지막 탭" className="ml-[26px]">
          <svg viewBox="0 0 16 18" className="h-[18px] w-[16px]" fill="none" stroke="currentColor" strokeWidth="2">
            <path d="M2 2l7 7-7 7M14 0v18" />
          </svg>
        </button>
      </div>
      <button type="button" className="ml-[21px] h-[45px] w-[248px] rounded-b-[6px] border-2 border-t-0 border-[#d6d6d6] bg-white font-bold text-[#f03a17]">
        5. 연구개발계획서
      </button>
      <button type="button" aria-label="새 탭" className="ml-[2px] flex h-[45px] w-[56px] items-center justify-center rounded-b-[6px] border-2 border-t-0 border-[#d6d6d6] bg-[#eeeeee] text-[#8c8c8c]">
        <Plus size={24} strokeWidth={1.500} />
      </button>
      <div className="ml-auto flex flex-[0_0_1395px] items-center">
        <span className="h-full w-[4px] border-x-2 border-dotted border-[#8c8c8c]" />
        <div className="ml-[6px] flex h-[26px] flex-1 items-center justify-between bg-[#dcdcdc] px-[6px]">
          <Chevron dir="left" className="text-[#a8a8a8]" />
          <Chevron dir="right" className="text-[#a8a8a8]" />
        </div>
        <span className="mr-[27px] ml-[3px] flex h-[26px] w-[18px] items-center justify-center bg-[#dcdcdc]">
          <span className="h-[20px] w-[2px] bg-[#707070]" />
        </span>
      </div>
    </div>
  );
}

function StatusBar() {
  const items = ["2/36쪽", "1단", "1줄", "9칸", "36773글자", "(E6): 문자 입력", "1/1 구역", "삽입"];
  return (
    <footer className="flex h-[41px] shrink-0 items-center text-[22px] whitespace-nowrap">
      <div className="flex gap-[32px] pl-[33px]">
        {items.map((s) => (
          <span key={s}>{s}</span>
        ))}
        <span className="text-[#2468f2]">변경 내용 [기록 중지]</span>
        <span>타수 : 162타</span>
      </div>
      <div className="ml-auto flex h-full items-center">
        <button type="button" aria-label="쪽 맞춤" className="flex h-full w-[56px] items-center justify-center bg-[#dcdcdc]">
          <svg viewBox="0 0 26 26" className="h-[26px] w-[26px]" fill="none" strokeWidth="2">
            <path d="M1 1h24v24H1z" stroke={INK} />
            <path d="M7 25V6h12v19" stroke="#2468f2" />
          </svg>
        </button>
        <button type="button" aria-label="폭 맞춤" className="ml-[14px]">
          <svg viewBox="0 0 26 26" className="h-[26px] w-[26px]" fill="none" strokeWidth="2">
            <path d="M1 9V1h24v8M1 17v8h24v-8" stroke={INK} />
            <path d="M3 13h20M7 9l-4 4 4 4M19 9l4 4-4 4" stroke="#2468f2" />
          </svg>
        </button>
        <button type="button" aria-label="전체 쪽" className="ml-[31px]">
          <svg viewBox="0 0 26 26" className="h-[26px] w-[26px]" fill="none" strokeWidth="2">
            <path d="M1 1h24v24H1z" stroke={INK} />
            <path d="M6 5h14v16H6z" stroke="#2468f2" />
          </svg>
        </button>
        <button type="button" aria-label="축소" className="ml-[44px]">
          <svg viewBox="0 0 26 26" className="h-[26px] w-[26px]" fill="none" stroke={INK} strokeWidth="2">
            <path d="M1 1h24v24H1z" />
            <path d="M9 9h8v8H9z" fill="#c9c9c9" />
          </svg>
        </button>
        <input
          type="range"
          aria-label="확대/축소"
          min={0}
          max={100}
          defaultValue={45}
          className="ml-[22px] h-[20px] w-[156px] appearance-none bg-transparent [&::-webkit-slider-runnable-track]:h-[3px] [&::-webkit-slider-runnable-track]:bg-[#c4c4c4] [&::-webkit-slider-thumb]:-mt-[7px] [&::-webkit-slider-thumb]:h-[17px] [&::-webkit-slider-thumb]:w-[17px] [&::-webkit-slider-thumb]:appearance-none [&::-webkit-slider-thumb]:rounded-full [&::-webkit-slider-thumb]:border-2 [&::-webkit-slider-thumb]:border-[#8c8c8c] [&::-webkit-slider-thumb]:bg-white"
        />
        <button type="button" aria-label="확대" className="ml-[22px]">
          <svg viewBox="0 0 26 26" className="h-[26px] w-[26px]" fill="none" stroke={INK} strokeWidth="2">
            <path d="M1 1h24v24H1z" />
            <path d="M5 5h16v16H5z" fill="#c9c9c9" />
          </svg>
        </button>
        <button type="button" aria-label="배율" className="ml-[28px] text-[#5f5f5f]">
          <Search size={28} strokeWidth={1.500} />
        </button>
        <span className="mr-[8px] ml-[20px]">90%</span>
      </div>
    </footer>
  );
}

export default function App() {
  return (
    <div className="flex h-screen overflow-hidden bg-linear-to-b from-[#020a24] via-[#00154a] to-[#020a24] font-['Noto_Sans_CJK_KR',sans-serif] text-[21px] font-[350] text-[#2b2b2b]">
      <div className="relative mr-[6px] flex min-w-0 flex-1 flex-col overflow-hidden border-2 border-[#808080] bg-white">
        <TitleBar />
        <MenuBar />
        <Ribbon />
        <Toolbar />
        <main className="flex min-h-0 flex-1 overflow-hidden bg-[#f5f5f5]">
          <aside className="w-[119px] shrink-0">
            <div className="h-[67px] pt-[7px] pl-[7px]">
              <button type="button" aria-label="탭 종류" className="flex h-[36px] w-[36px] items-center justify-center bg-[#e9e9e9]">
                <span className="h-[12px] w-[13px] border-b-4 border-l-4 border-[#8c8c8c]" />
              </button>
            </div>
            <VerticalRuler />
          </aside>
          <div className="flex min-w-0 flex-1 flex-col overflow-hidden">
            <HorizontalRuler />
            <div className="flex min-h-0 flex-1 gap-[25px] overflow-hidden">
              <PlanPage />
              <SummaryPage />
            </div>
          </div>
          <SideScroll />
        </main>
        <TabStrip />
        <StatusBar />
        <div className="pointer-events-none absolute inset-y-0 right-0 w-[40px] bg-linear-to-r from-transparent to-black/15" />
      </div>
    </div>
  );
}
